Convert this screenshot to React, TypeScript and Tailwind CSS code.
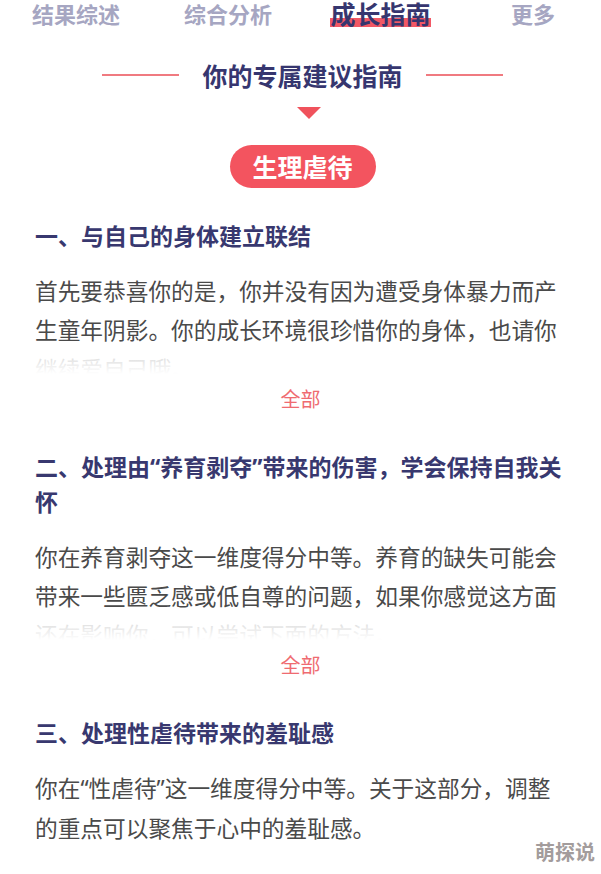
import React from "react"

const tabs = [
  { label: "结果综述", active: false },
  { label: "综合分析", active: false },
  { label: "成长指南", active: true },
  { label: "更多", active: false },
]

const sections = [
  {
    title: ["一、与自己的身体建立联结"],
    lines: [
      "首先要恭喜你的是，你并没有因为遭受身体暴力而产",
      "生童年阴影。你的成长环境很珍惜你的身体，也请你",
      "继续爱自己哦。",
    ],
    folded: true,
  },
  {
    title: ["二、处理由“养育剥夺”带来的伤害，学会保持自我关", "怀"],
    lines: [
      "你在养育剥夺这一维度得分中等。养育的缺失可能会",
      "带来一些匮乏感或低自尊的问题，如果你感觉这方面",
      "还在影响你，可以尝试下面的方法。",
    ],
    folded: true,
  },
  {
    title: ["三、处理性虐待带来的羞耻感"],
    lines: [
      "你在“性虐待”这一维度得分中等。关于这部分，调整",
      "的重点可以聚焦于心中的羞耻感。",
    ],
    folded: false,
  },
]

// curly quotes come out full width in the CJK font, the page uses the narrow latin ones
function withQuotes(text: string) {
  return text.split(/([“”])/).map((part, i) =>
    part === "“" || part === "”" ? (
      <span key={i} style={{ fontFamily: '"Noto Sans", sans-serif' }}>
        {part}
      </span>
    ) : (
      part
    )
  )
}

function Section({
  title,
  lines,
  folded,
}: {
  title: string[]
  lines: string[]
  folded: boolean
}) {
  return (
    <div className="flex flex-col">
      <h2 className="text-[23px] leading-[34px] font-bold text-[#38386f]">
        {title.map((t) => (
          <div key={t} className="whitespace-nowrap">
            {withQuotes(t)}
          </div>
        ))}
      </h2>
      <div
        className={
          folded
            ? "relative mt-[19px] h-[103px] overflow-hidden"
            : "relative mt-[19px]"
        }
      >
        {lines.map((l) => (
          <div
            key={l}
            className="whitespace-nowrap text-[22.7px] leading-[39px] text-[#4a4a4a]"
          >
            {withQuotes(l)}
          </div>
        ))}
        {folded && (
          <div className="absolute left-0 right-0 top-[74px] bottom-0 bg-linear-to-b from-white/70 to-white" />
        )}
      </div>
      {folded && (
        <div className="mt-[10px] text-center text-[20px] leading-[30px] text-[#ef6b71]">
          全部
        </div>
      )}
    </div>
  )
}

export default function App() {
  return (
    <div
      className="relative h-[874px] w-[601px] overflow-hidden bg-white"
      style={{ fontFamily: '"Noto Sans CJK SC", "Noto Sans", sans-serif' }}
    >
      {/* tabs */}
      <div className="grid grid-cols-[152px_152px_153px_152px] h-[27px]">
        {tabs.map((tab) => (
          <div key={tab.label} className="flex justify-center items-start">
            {tab.active ? (
              <span className="relative inline-block text-[25px] leading-[27px] font-bold text-[#36366f]">
                <span className="absolute left-0 right-0 top-[18px] h-[9px] bg-[#f25865]" />
                <span className="relative">{tab.label}</span>
              </span>
            ) : (
              <span className="text-[22px] leading-[27px] font-bold text-[#a6a6c2]">
                {tab.label}
              </span>
            )}
          </div>
        ))}
      </div>

      {/* title */}
      <div className="mt-[31px] flex items-center justify-center gap-[23px] pl-[4px]">
        <div className="h-[2px] w-[77px] bg-[#f07a80]" />
        <div className="text-[25px] leading-[34px] font-bold text-[#36366f]">
          你的专属建议指南
        </div>
        <div className="h-[2px] w-[77px] bg-[#f07a80]" />
      </div>

      <div className="mt-[15px] flex justify-center pl-[16px]">
        <div className="h-0 w-0 border-l-[12px] border-r-[12px] border-t-[12px] border-l-transparent border-r-transparent border-t-[#f0525c]" />
      </div>

      <div className="mt-[26px] flex justify-center pl-[4px]">
        <div className="flex h-[43px] w-[146px] items-center justify-center rounded-full bg-[#f3545f] text-[25px] font-bold text-white">
          生理虐待
        </div>
      </div>

      <div className="mt-[30px] flex flex-col gap-[35px] px-[35px]">
        {sections.map((s) => (
          <Section key={s.title[0]} {...s} />
        ))}
      </div>

      <div className="absolute right-[6px] bottom-[10px] text-[20px] leading-[24px] font-bold text-[#a39c9c]">
        萌探说
      </div>
    </div>
  )
}
